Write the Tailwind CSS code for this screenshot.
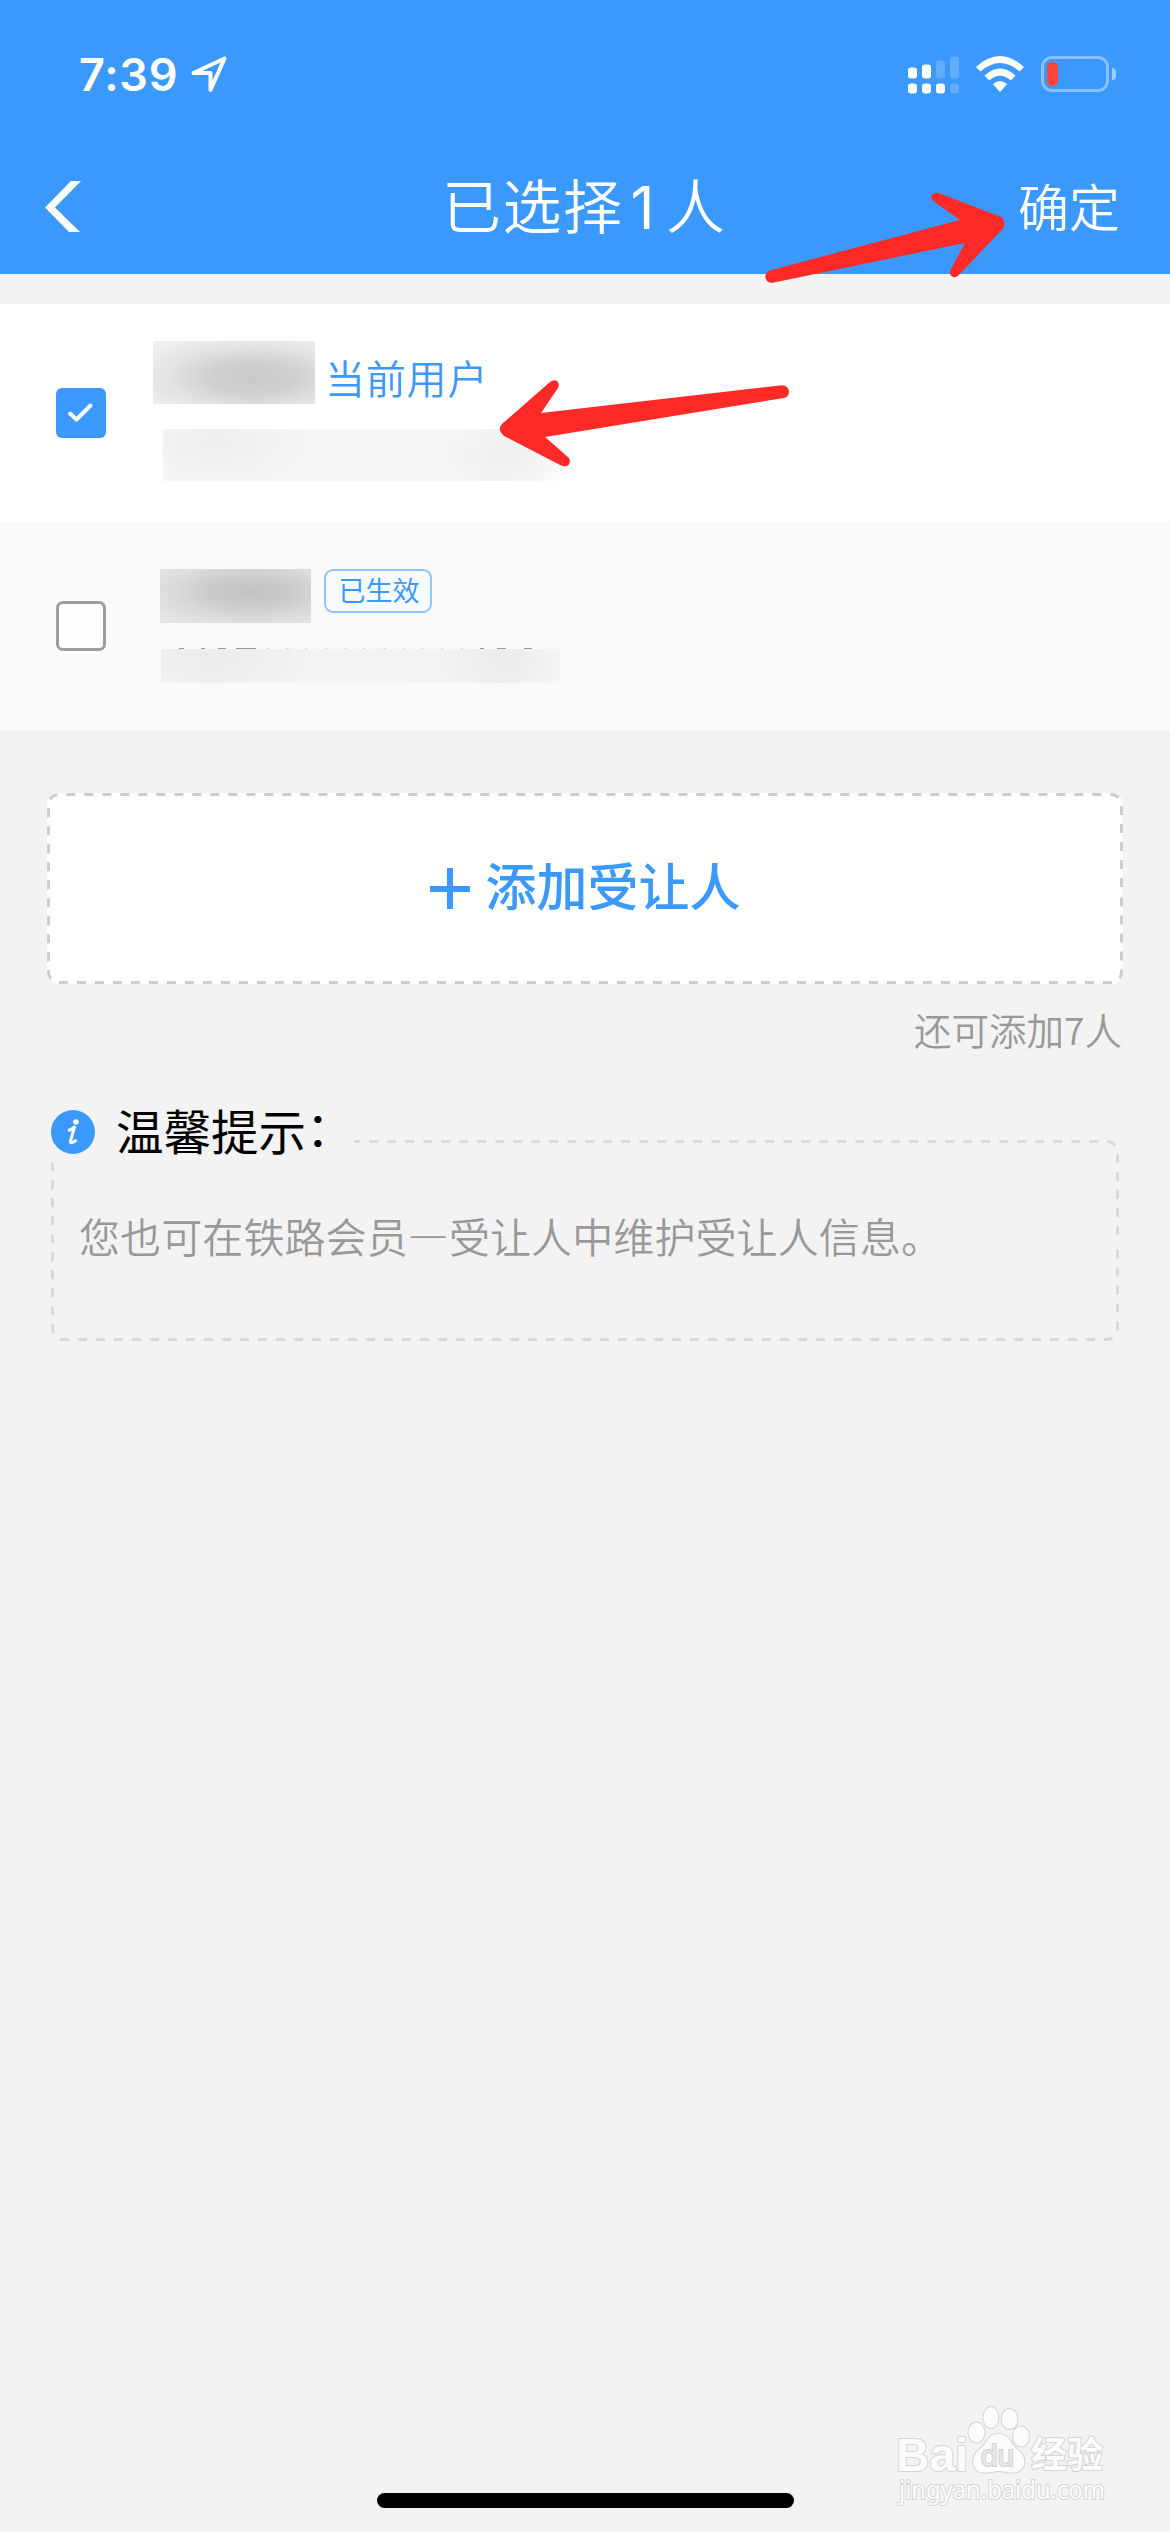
<!DOCTYPE html>
<html lang="zh-CN">
<head>
    <meta charset="UTF-8">
    <meta name="viewport" content="width=device-width, initial-scale=1.0">
    <script src="https://cdn.jsdelivr.net/npm/@tailwindcss/browser@4"></script>
    <title>已选择1人</title>
</head>
<body class="bg-[#f3f3f3]">
    <div class="relative w-[1170px] h-[2532px] overflow-hidden bg-[#f3f3f3] font-['Noto_Sans_CJK_SC',sans-serif]">
        <!-- header -->
        <header class="h-[274px] bg-[#3b98fc] text-white">
            <div class="h-[148px] pl-[79px] pr-[54px] flex items-center justify-between">
                <div class="flex items-center gap-[12px]">
                    <span class="font-['Inter',sans-serif] font-semibold text-[45px] leading-none tracking-[0.8px]">7:39</span>
                    <svg class="w-[38px] h-[38px]" viewBox="0 0 38 38" fill="none" stroke="#fff" stroke-width="4" stroke-linejoin="round"><path d="M3.500 18 L34.500 3.500 L20.500 35 V18 Z"/></svg>
                </div>
                <div class="flex items-center">
                    <svg class="w-[52px] h-[38px] mr-[16px] mt-[2px]" viewBox="0 0 52 38" fill="#fff">
                        <rect x="0" y="11.500" width="9" height="11" rx="3"/>
                        <rect x="14" y="8.500" width="9" height="14" rx="3"/>
                        <rect x="28" y="4.500" width="9" height="18" rx="3" opacity=".2"/>
                        <rect x="42" y="0.500" width="9" height="22" rx="3" opacity=".2"/>
                        <rect x="0" y="27.500" width="9" height="10" rx="3"/>
                        <rect x="14" y="27.500" width="9" height="10" rx="3"/>
                        <rect x="28" y="27.500" width="9" height="10" rx="3"/>
                        <rect x="42" y="27.500" width="9" height="10" rx="3" opacity=".2"/>
                    </svg>
                    <svg class="w-[48px] h-[36px] mr-[17px]" viewBox="0 0 48 36" fill="#fff">
                        <path d="M0 11 Q24 -11 48 11 L43.500 15.500 Q24 -1.500 4.500 15.500 Z"/>
                        <path d="M8.500 19.500 Q24 5.500 39.500 19.500 L35 24.500 Q24 15 13 24.500 Z"/>
                        <path d="M17 28 Q24 22 31 28 L24.800 35.300 Q24 36 23.200 35.300 Z"/>
                    </svg>
                    <div class="w-[68px] h-[36px] border-[3px] border-white/40 rounded-[11px] p-[3px]">
                        <div class="w-[11px] h-[24px] rounded-[5px] bg-[#ff453a]"></div>
                    </div>
                    <div class="w-[4px] h-[12px] ml-[3px] rounded-r-full bg-white/50"></div>
                </div>
            </div>
            <div class="relative h-[126px] pl-[45px] pr-[50px] flex items-center justify-between">
                <svg class="w-[36px] h-[51px] -mt-[9px]" viewBox="0 0 36 51" fill="#fff"><path d="M26 0 H36 L10 26.500 L35 51 H24 L0 26.500 Z"/></svg>
                <h1 class="absolute left-[442px] top-[14px] text-[59px] leading-[84px] tracking-[1.5px] whitespace-nowrap font-[350]">已选择<span class="font-['Inter',sans-serif] font-normal text-[59px] ml-[7px] mr-[10px]">1</span>人</h1>
                <span class="text-[51px] leading-[76px] -mt-[12px] font-[350]">确定</span>
            </div>
        </header>

        <!-- user list -->
        <ul class="mt-[30px]">
            <li class="h-[218px] bg-white flex pl-[56px]">
                <div class="mt-[84px] w-[50px] h-[50px] rounded-[6px] bg-[#3b98fc]">
                    <svg viewBox="0 0 50 50" fill="none" stroke="#fff" stroke-width="4" stroke-linecap="round" stroke-linejoin="round"><path d="M14 25.500 L20.500 31.500 L34.500 17.500"/></svg>
                </div>
                <div class="ml-[47px] pt-[37px]">
                    <div class="flex h-[63px]">
                        <div class="w-[162px] h-[63px] bg-[radial-gradient(ellipse_at_62%_58%,#cacaca_0%,#d0d0d0_30%,#e2e3e4_60%,#eff0f1_90%)]"></div>
                        <span class="ml-[10px] mt-[8px] text-[40px] leading-[56px] tracking-[0.8px] font-[350] text-[#3b98fc]">当前用户</span>
                    </div>
                    <div class="ml-[10px] mt-[25px] w-[411px] h-[52px] bg-[radial-gradient(70px_45px_at_84%_50%,#efefef_0%,transparent_100%),radial-gradient(110px_50px_at_13%_25%,#eeeeee_0%,transparent_100%),linear-gradient(to_right,#f7f7f7_0%,#f6f7f8_80%,#ffffff_100%)]"></div>
                </div>
            </li>
            <li class="h-[209px] bg-[#fafafa] flex pl-[56px]">
                <div class="mt-[79px] w-[50px] h-[50px] rounded-[7px] border-[3px] border-[#9c9e9d] bg-white/60"></div>
                <div class="ml-[54px] pt-[47px]">
                    <div class="flex">
                        <div class="w-[151px] h-[54px] bg-[radial-gradient(ellipse_at_60%_42%,#c4c4c4_0%,#cacaca_30%,#d9dadb_60%,#e5e6e7_90%)]"></div>
                        <span class="ml-[13px] w-[108px] h-[44px] border-2 border-[#8fc4fd] rounded-[9px] bg-[#f5fbff] pl-[2px] text-center text-[27px] leading-[38px] text-[#3b98fc]">已生效</span>
                    </div>
                    <!-- top edges of the masked number -->
                    <svg class="block mt-[25px] w-[400px] h-[1px]" viewBox="0 0 400 1">
                        <path d="M19 .5h5M41 .5h4M58 .5h8M76 .5h20M320 .5h4M337 .5h9M364 .5h8" stroke="#999"/>
                        <path d="M106 .5h3M126 .5h3M145 .5h3M165 .5h3M184 .5h3M203 .5h3M223 .5h3M242 .5h3M261 .5h3M281 .5h3M300 .5h3" stroke="#ddd"/>
                    </svg>
                    <div class="ml-px w-[400px] h-[34px] bg-[radial-gradient(60px_40px_at_86%_40%,#eaeaea_0%,transparent_100%),radial-gradient(100px_45px_at_13%_30%,#ebebeb_0%,transparent_100%),linear-gradient(to_right,#f4f4f4_0%,#f2f3f4_80%,#f7f7f7_100%)]"></div>
                </div>
            </li>
        </ul>

        <!-- add button -->
        <div class="relative mt-[62px] ml-[47px] w-[1076px] h-[191px] rounded-[12px] bg-white flex items-center justify-center gap-[15px] pl-px text-[#3b98fc]">
            <svg class="absolute inset-0 w-[1076px] h-[191px]" viewBox="0 0 1076 191" fill="none" stroke="#ccc" stroke-width="3" stroke-dasharray="9 9" stroke-dashoffset="9">
                <path d="M1074.500 95.500 V179 A10.500 10.500 0 0 1 1064 189.500 H12 A10.500 10.500 0 0 1 1.500 179 V12 A10.500 10.500 0 0 1 12 1.500 H1064 A10.500 10.500 0 0 1 1074.500 12 Z"/>
            </svg>
            <svg class="w-[40px] h-[41px]" viewBox="0 0 40 41" fill="#3b98fc"><path d="M17 0h6v18h17v6H23v17h-6V24H0v-6h17z"/></svg>
            <span class="text-[51px] leading-[76px] font-medium -mt-[10px]">添加受让人</span>
        </div>
        <p class="mt-[17px] h-[56px] pr-[48px] text-right text-[37.5px] leading-[56px] font-[350] text-[#999]">还可添加7人</p>

        <!-- tips -->
        <section class="relative mt-[83px] ml-[51px] w-[1068px] h-[201px]">
            <svg class="absolute inset-0 w-[1068px] h-[201px]" viewBox="0 0 1068 201" fill="none" stroke="#d9d9d9" stroke-width="3" stroke-dasharray="9 9" stroke-dashoffset="9">
                <path d="M1066.500 100.500 V189 A10.500 10.500 0 0 1 1056 199.500 H12 A10.500 10.500 0 0 1 1.500 189 V12 A10.500 10.500 0 0 1 12 1.500 H1056 A10.500 10.500 0 0 1 1066.500 12 Z"/>
            </svg>
            <div class="absolute left-0 -top-[38px] w-[303px] h-[58px] bg-[#f3f3f3] flex items-center">
                <svg class="shrink-0 w-[44px] h-[44px] mt-[2px]" viewBox="0 0 44 44">
                    <circle cx="22" cy="22" r="22" fill="#3b98fc"/>
                    <circle cx="25" cy="12" r="2.800" fill="#fff"/>
                    <path d="M17 20.500 Q20 20 23.500 17 L19.500 31 Q19 35 25.500 30" fill="none" stroke="#fff" stroke-width="3" stroke-linejoin="round"/>
                </svg>
                <h2 class="ml-[21px] -mt-[3px] text-[47.5px] leading-[58px] whitespace-nowrap text-black">温馨提示<span class="relative -top-[4px]">：</span></h2>
            </div>
            <p class="relative pl-[28px] pt-[65px] text-[41px] leading-[60px] tracking-[0.1px] font-[350] text-[#999]">您也可在铁路会员<span class="font-bold">—</span>受让人中维护受让人信息。</p>
        </section>

        <!-- arrows -->
        <svg class="absolute left-0 top-0 w-[1170px] h-[500px]" viewBox="0 0 1170 500" fill="#ff2a27">
            <path d="M770 270.500 L960 220 L933 201 Q929 196 934 193.500 Q937 192 941 194 L1000 216.500 Q1006 220 1003.500 228 L959.500 274.500 Q956 278.500 952 276.500 Q949 274.500 950.500 270 L965 243 L774 282.500 Q767 284 765.500 278 Q764.500 273 770 270.500 Z"/>
            <path d="M541 413 L782 385.300 Q788 386 789 391 Q789 397 784 398 L545 437 L569 458 Q571 462 568.500 465 Q566 467.500 560 465 L504 436 Q496 429 503 423 L550 382 Q554 379 557.500 381.500 Q560 384 558 388 Z"/>
        </svg>

        <!-- watermark -->
        <svg class="absolute left-[890px] top-[2400px] w-[230px] h-[112px]" viewBox="0 0 230 112" fill="#fcfcfc" stroke="#d4d4d4" stroke-width="2" paint-order="stroke">
            <text x="6" y="71" font-family="Liberation Sans" font-size="47" font-weight="700" textLength="72" lengthAdjust="spacingAndGlyphs">Bai</text>
            <ellipse cx="86.500" cy="32.500" rx="8" ry="10"/>
            <ellipse cx="101" cy="17.500" rx="7.500" ry="10.500"/>
            <ellipse cx="119.500" cy="19" rx="8" ry="10"/>
            <ellipse cx="131" cy="36.500" rx="8" ry="10"/>
            <path d="M108.500 34 C97 34 97 44 89 50 C80 57 81 72 94 72.500 C101 73 104 71 108.500 71 C113 71 116 73 123 72.500 C136 72 138 57 128 50 C120 44 120 34 108.500 34 Z"/>
            <text x="91" y="66" font-family="Liberation Sans" font-size="30" textLength="33" lengthAdjust="spacingAndGlyphs" fill="#e8e8e8" stroke="#cfcfcf">du</text>
            <text x="141" y="68" font-family="Noto Sans CJK SC" font-size="36" font-weight="700" textLength="72">经验</text>
            <text x="9" y="99" font-family="Noto Sans" font-size="25" textLength="206" lengthAdjust="spacingAndGlyphs">jingyan.baidu.com</text>
        </svg>

        <!-- home indicator -->
        <div class="absolute left-[377px] top-[2493px] w-[417px] h-[15px] rounded-full bg-black"></div>
    </div>
</body>
</html>
